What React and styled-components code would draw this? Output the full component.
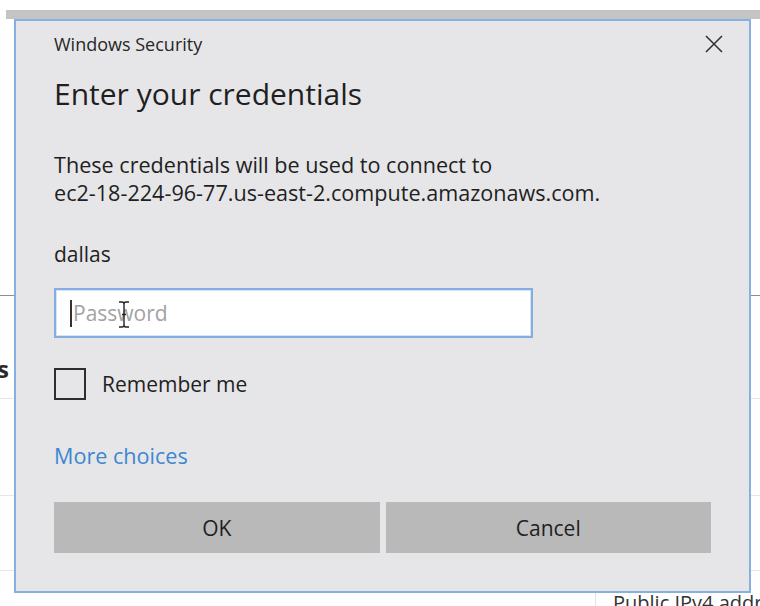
import React from 'react';
import styled, { createGlobalStyle } from 'styled-components';

const Global = createGlobalStyle`
  html, body { margin: 0; padding: 0; background: #ffffff; }
  body { font-family: "Open Sans", "Noto Sans", sans-serif; color: #1f1f1f; }
`;

const Screen = styled.div`
  position: relative;
  width: 760px;
  height: 606px;
  overflow: hidden;
  background: #ffffff;
`;

/* ---------- background window (partly hidden behind the dialog) ---------- */
const TopBand = styled.div`
  margin: 10px 0 0 6px;
  height: 9px;
  background: #c4c4c4;
`;

const BackRows = styled.div`
  display: flex;
  flex-direction: column;
`;

const HeaderArea = styled.div`
  height: 276px;
  border-bottom: 1px solid #8e8e8e;
`;

const TableRow = styled.div`
  height: ${(p) => p.$h}px;
  display: flex;
  align-items: flex-end;
  border-bottom: ${(p) => (p.$last ? 'none' : '1px solid #e6e6e6')};
`;

const ClippedLabel = styled.div`
  width: 9px;
  overflow: hidden;
  display: flex;
  justify-content: flex-end;
  white-space: nowrap;
  font-size: 24px;
  font-weight: 700;
  line-height: 30px;
  color: #2a2a2a;
  padding-bottom: 14px;
`;

const Spacer = styled.div`
  width: ${(p) => p.$w}px;
  flex: none;
`;

const ColumnCell = styled.div`
  align-self: stretch;
  border-left: 1px solid #e2e2e2;
  padding: 20px 0 0 17px;
  font-size: 20px;
  line-height: 24px;
  color: #333;
  white-space: nowrap;
`;

/* ---------- dialog ---------- */
const Dialog = styled.div`
  position: absolute;
  left: 14px;
  top: 19px;
  width: 737px;
  height: 574px;
  box-sizing: border-box;
  background: #e6e6e8;
  border: 2px solid #86b0e2;
  display: flex;
  flex-direction: column;
`;

const TitleBar = styled.div`
  display: flex;
  align-items: center;
  justify-content: space-between;
  padding: 11px 26px 0 38px;
`;

const TitleText = styled.div`
  font-size: 18px;
  line-height: 24px;
  color: #262626;
`;

const CloseButton = styled.button`
  border: none;
  background: transparent;
  padding: 0;
  width: 18px;
  height: 18px;
  display: flex;
  cursor: default;
`;

const Content = styled.div`
  display: flex;
  flex-direction: column;
  padding: 0 38px;
`;

const Heading = styled.h1`
  margin: 19px 0 0;
  font-size: 30px;
  font-weight: 400;
  line-height: 38px;
  color: #1f1f1f;
`;

const Message = styled.p`
  margin: ${(p) => p.$mt}px 0 0;
  font-size: ${(p) => p.$size || 21}px;
  line-height: 28px;
  color: #1f1f1f;
`;

const FieldWrap = styled.div`
  position: relative;
  margin-top: 20px;
  width: 479px;
`;

const Field = styled.div`
  height: 50px;
  box-sizing: border-box;
  background: #ffffff;
  border: 2px solid #85aee0;
  box-shadow: inset 0 0 0 1px #d6e5f6;
  display: flex;
  align-items: center;
  padding-left: 14px;
`;

const Caret = styled.span`
  width: 2px;
  height: 27px;
  background: #333;
  margin-right: 1px;
`;

const Placeholder = styled.span`
  font-size: 21px;
  line-height: 24px;
  color: #a2a2a2;
`;

const IBeam = styled.svg`
  position: absolute;
  left: 64px;
  top: 13px;
`;

const CheckRow = styled.label`
  margin-top: 30px;
  display: flex;
  align-items: center;
  gap: 16px;
  height: 32px;
`;

const Box = styled.span`
  width: 32px;
  height: 32px;
  box-sizing: border-box;
  border: 2px solid #2e2e2e;
  flex: none;
`;

const CheckText = styled.span`
  font-size: 21px;
  line-height: 24px;
  color: #1f1f1f;
`;

const Link = styled.a`
  margin-top: 44px;
  font-size: 21.6px;
  line-height: 24px;
  color: #3d86d2;
  text-decoration: none;
  align-self: flex-start;
`;

const Buttons = styled.div`
  margin-top: 34px;
  display: grid;
  grid-template-columns: 1fr 1fr;
  gap: 6px;
`;

const Button = styled.button`
  height: 51px;
  border: none;
  background: #b9b9b9;
  font-family: "Open Sans", "Noto Sans", sans-serif;
  font-size: 21px;
  color: #1f1f1f;
  padding: 0;
`;

export default function App() {
  return (
    <Screen>
      <Global />
      <TopBand />
      <BackRows>
        <HeaderArea />
        <TableRow $h={102}>
          <ClippedLabel>Instances</ClippedLabel>
        </TableRow>
        <TableRow $h={96} />
        <TableRow $h={74} />
        <TableRow $h={40} $last>
          <Spacer $w={595} />
          <ColumnCell>Public IPv4 address</ColumnCell>
        </TableRow>
      </BackRows>

      <Dialog>
        <TitleBar>
          <TitleText>Windows Security</TitleText>
          <CloseButton aria-label="Close">
            <svg width="18" height="18" viewBox="0 0 18 18">
              <path d="M1 1 L17 17 M17 1 L1 17" stroke="#333" strokeWidth="1.6" fill="none" />
            </svg>
          </CloseButton>
        </TitleBar>
        <Content>
          <Heading>Enter your credentials</Heading>
          <Message $mt={38} $size={21.6}>
            These credentials will be used to connect to
            <br />
            ec2-18-224-96-77.us-east-2.compute.amazonaws.com.
          </Message>
          <Message $mt={33}>dallas</Message>
          <FieldWrap>
            <Field>
              <Caret />
              <Placeholder>Password</Placeholder>
            </Field>
            <IBeam width="12" height="27" viewBox="0 0 12 27">
              <path d="M1 1 H4 Q6 1 6 3 V24 Q6 26 4 26 H1 M11 1 H8 Q6 1 6 3 M6 24 Q6 26 8 26 H11 M4 13.5 H8" stroke="#222" strokeWidth="1.4" fill="none" />
            </IBeam>
          </FieldWrap>
          <CheckRow>
            <Box />
            <CheckText>Remember me</CheckText>
          </CheckRow>
          <Link href="#">More choices</Link>
          <Buttons>
            <Button>OK</Button>
            <Button>Cancel</Button>
          </Buttons>
        </Content>
      </Dialog>
    </Screen>
  );
}
